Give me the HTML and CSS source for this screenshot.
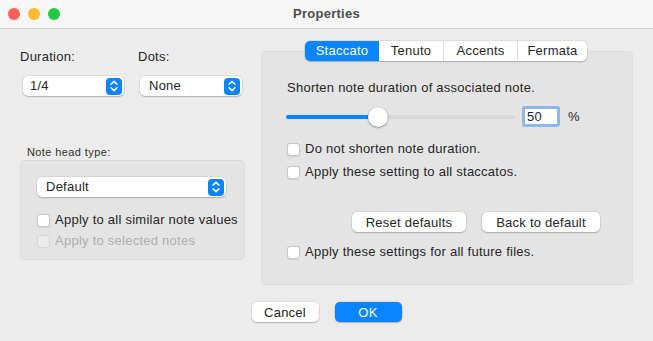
FILE: index.html
```html
<!DOCTYPE html>
<html lang="en">
<head>
    <meta charset="UTF-8">
    <title>Properties</title>
    <link rel="stylesheet" href="styles.css">
</head>
<body>
    <div class="window">
        <div class="titlebar">
            <div class="lights">
                <span class="light light-close"></span>
                <span class="light light-min"></span>
                <span class="light light-max"></span>
            </div>
            <div class="title">Properties</div>
        </div>

        <div class="content">
            <div class="left">
                <div class="fields">
                    <div class="field field-duration">
                        <div class="field-label">Duration:</div>
                        <div class="popup popup-duration">
                            <span>1/4</span>
                            <span class="popup-arrow"><svg width="16" height="18" viewBox="0 0 16 18"><path d="M5 7.2 L8 4.4 L11 7.2 M5 10.8 L8 13.6 L11 10.8" fill="none" stroke="#fff" stroke-width="1.5" stroke-linecap="round" stroke-linejoin="round"/></svg></span>
                        </div>
                    </div>
                    <div class="field field-dots">
                        <div class="field-label">Dots:</div>
                        <div class="popup popup-dots">
                            <span>None</span>
                            <span class="popup-arrow"><svg width="16" height="18" viewBox="0 0 16 18"><path d="M5 7.2 L8 4.4 L11 7.2 M5 10.8 L8 13.6 L11 10.8" fill="none" stroke="#fff" stroke-width="1.5" stroke-linecap="round" stroke-linejoin="round"/></svg></span>
                        </div>
                    </div>
                </div>

                <div class="notehead">
                    <div class="small-label">Note head type:</div>
                    <div class="group group-notehead">
                        <div class="popup popup-wide">
                            <span>Default</span>
                            <span class="popup-arrow"><svg width="16" height="18" viewBox="0 0 16 18"><path d="M5 7.2 L8 4.4 L11 7.2 M5 10.8 L8 13.6 L11 10.8" fill="none" stroke="#fff" stroke-width="1.5" stroke-linecap="round" stroke-linejoin="round"/></svg></span>
                        </div>
                        <div class="check-list">
                            <div class="check"><span class="box"></span>Apply to all similar note values</div>
                            <div class="check disabled"><span class="box"></span>Apply to selected notes</div>
                        </div>
                    </div>
                </div>
            </div>

            <div class="right">
                <div class="tabs">
                    <div class="tab tab-staccato active">Staccato</div>
                    <div class="tab tab-tenuto">Tenuto</div>
                    <div class="tab tab-accents">Accents</div>
                    <div class="tab tab-fermata">Fermata</div>
                </div>
                <div class="group group-tab">
                    <div class="desc">Shorten note duration of associated note.</div>
                    <div class="slider-row">
                        <div class="slider">
                            <div class="slider-fill" style="width: 40%"></div>
                            <div class="slider-knob" style="left: 40%"></div>
                        </div>
                        <div class="num-input"><span>50</span></div>
                        <span class="unit">%</span>
                    </div>
                    <div class="check-list check-list-tab">
                        <div class="check"><span class="box"></span>Do not shorten note duration.</div>
                        <div class="check"><span class="box"></span>Apply these setting to all staccatos.</div>
                    </div>
                    <div class="button-row">
                        <button class="btn btn-reset">Reset defaults</button>
                        <button class="btn btn-back">Back to default</button>
                    </div>
                    <div class="check check-future"><span class="box"></span>Apply these settings for all future files.</div>
                </div>
            </div>
        </div>

        <div class="footer">
            <button class="btn btn-cancel">Cancel</button>
            <button class="btn btn-ok">OK</button>
        </div>
    </div>
</body>
</html>
```

FILE: styles.css
```css
body {
    margin: 0;
    padding: 0;
    background-color: #ececec;
    font-family: 'Liberation Sans', Arial, sans-serif;
    font-size: 13px;
    line-height: 16px;
    letter-spacing: 0.25px;
    color: #262626;
}
.window {
    width: 653px;
    height: 341px;
    overflow: hidden;
}
.titlebar {
    height: 28px;
    background-color: #f6f6f6;
    border-bottom: 1px solid #d4d4d4;
    display: flex;
    align-items: center;
    position: relative;
}
.lights {
    display: flex;
    gap: 8px;
    padding-left: 8px;
}
.light {
    width: 12px;
    height: 12px;
    border-radius: 50%;
}
.light-close {
    background-color: #fe5f57;
}
.light-min {
    background-color: #febc2e;
}
.light-max {
    background-color: #28c840;
}
.title {
    position: absolute;
    left: 0;
    right: 0;
    text-align: center;
    font-weight: bold;
    color: #4d4d4d;
}
.content {
    display: flex;
    padding-left: 20px;
}
.left {
    width: 225px;
    padding-top: 20px;
}
.fields {
    display: flex;
}
.field-duration {
    width: 118px;
}
.field-label {
    height: 16px;
    margin-bottom: 11px;
}
.popup {
    height: 20px;
    background-color: #fff;
    border-radius: 5px;
    box-shadow: 0 0 0 0.5px rgba(0, 0, 0, 0.12), 0 1px 1.5px rgba(0, 0, 0, 0.2);
    display: flex;
    align-items: center;
    justify-content: space-between;
    padding: 0 2px 0 8px;
    box-sizing: border-box;
}
.popup-duration {
    width: 101px;
    margin-left: 3px;
    padding-left: 7px;
}
.popup-dots {
    width: 102px;
    margin-left: 2px;
    padding-left: 9px;
}
.popup-arrow {
    width: 16px;
    height: 17px;
    background-color: #0a84ff;
    border-radius: 4px;
    display: flex;
    align-items: center;
    justify-content: center;
}
.popup-arrow svg {
    display: block;
}
.notehead {
    margin-top: 49px;
}
.small-label {
    font-size: 11px;
    line-height: 14px;
    letter-spacing: 0.4px;
    padding-left: 7px;
    margin-bottom: 1px;
    color: #2f2f2f;
}
.group {
    background-color: #e4e4e4;
    border: 1px solid #dcdcdc;
    border-radius: 5px;
    box-sizing: border-box;
}
.group-notehead {
    height: 100px;
    padding: 16px 0 0 16px;
}
.popup-wide {
    width: 189px;
    padding-left: 9px;
}
.check-list {
    display: flex;
    flex-direction: column;
    gap: 5px;
    margin-top: 15px;
}
.check {
    display: flex;
    align-items: center;
    height: 16px;
    white-space: nowrap;
}
.box {
    width: 13px;
    height: 13px;
    box-sizing: border-box;
    background-color: #fff;
    border: 1px solid #c6c6c6;
    border-radius: 3px;
    margin-right: 5px;
    box-shadow: 0 0.5px 1px rgba(0, 0, 0, 0.08);
}
.check.disabled {
    color: #aeaeae;
}
.check.disabled .box {
    background-color: #ececec;
    border-color: #d6d6d6;
    box-shadow: none;
}
.right {
    margin-left: 16px;
    width: 372px;
    padding-top: 12px;
    display: flex;
    flex-direction: column;
    align-items: center;
}
.tabs {
    display: flex;
    height: 20px;
    background-color: #fff;
    border-radius: 5px;
    box-shadow: 0 0 0 0.5px rgba(0, 0, 0, 0.12), 0 1px 1.5px rgba(0, 0, 0, 0.2);
    margin-bottom: -10px;
    position: relative;
    z-index: 1;
    margin-left: -2px;
}
.tab {
    display: flex;
    align-items: center;
    justify-content: center;
    border-left: 1px solid #dedede;
    box-sizing: border-box;
}
.tab-staccato {
    width: 74px;
    border-left: none;
}
.tab-tenuto {
    width: 64px;
    border-left: none;
}
.tab-accents {
    width: 74px;
}
.tab-fermata {
    width: 70px;
}
.tab.active {
    background-color: #0a84ff;
    color: #fff;
    border-radius: 5px 0 0 5px;
}
.group-tab {
    width: 372px;
    height: 234px;
    padding: 28px 0 0 25px;
}
.desc {
    height: 16px;
}
.slider-row {
    display: flex;
    align-items: center;
    height: 21px;
    margin-top: 10px;
}
.slider {
    width: 229px;
    height: 4px;
    border-radius: 2px;
    background-color: #d9d9d9;
    position: relative;
    margin-left: -1px;
}
.slider-fill {
    height: 4px;
    border-radius: 2px;
    background-color: #0a84ff;
}
.slider-knob {
    position: absolute;
    top: -8px;
    width: 20px;
    height: 20px;
    margin-left: -10px;
    border-radius: 50%;
    background-color: #fff;
    box-shadow: 0 0 0 0.5px rgba(0, 0, 0, 0.15), 0 1px 2px rgba(0, 0, 0, 0.3);
}
.num-input {
    width: 38px;
    height: 21px;
    box-sizing: border-box;
    margin-left: 7px;
    border: 3px solid #8db6ef;
    border-radius: 3px;
    background-color: #fff;
    display: flex;
    align-items: center;
    padding-left: 2px;
}
.unit {
    margin-left: 8px;
}
.check-list-tab {
    margin-top: 14px;
    gap: 7px;
}
.button-row {
    display: flex;
    justify-content: flex-end;
    gap: 16px;
    padding-right: 32px;
    margin-top: 32px;
}
.btn {
    height: 20px;
    font-family: inherit;
    font-size: 13px;
    letter-spacing: 0.25px;
    color: #262626;
    background-color: #fff;
    border: none;
    border-radius: 5px;
    box-shadow: 0 0 0 0.5px rgba(0, 0, 0, 0.12), 0 1px 1.5px rgba(0, 0, 0, 0.2);
    padding: 0;
}
.btn-reset {
    width: 114px;
}
.btn-back {
    width: 118px;
}
.check-future {
    margin-top: 12px;
}
.footer {
    display: flex;
    justify-content: center;
    gap: 16px;
    margin-top: 17px;
}
.btn-cancel {
    width: 67px;
}
.btn-ok {
    width: 67px;
    background-color: #0a84ff;
    color: #fff;
}
```
